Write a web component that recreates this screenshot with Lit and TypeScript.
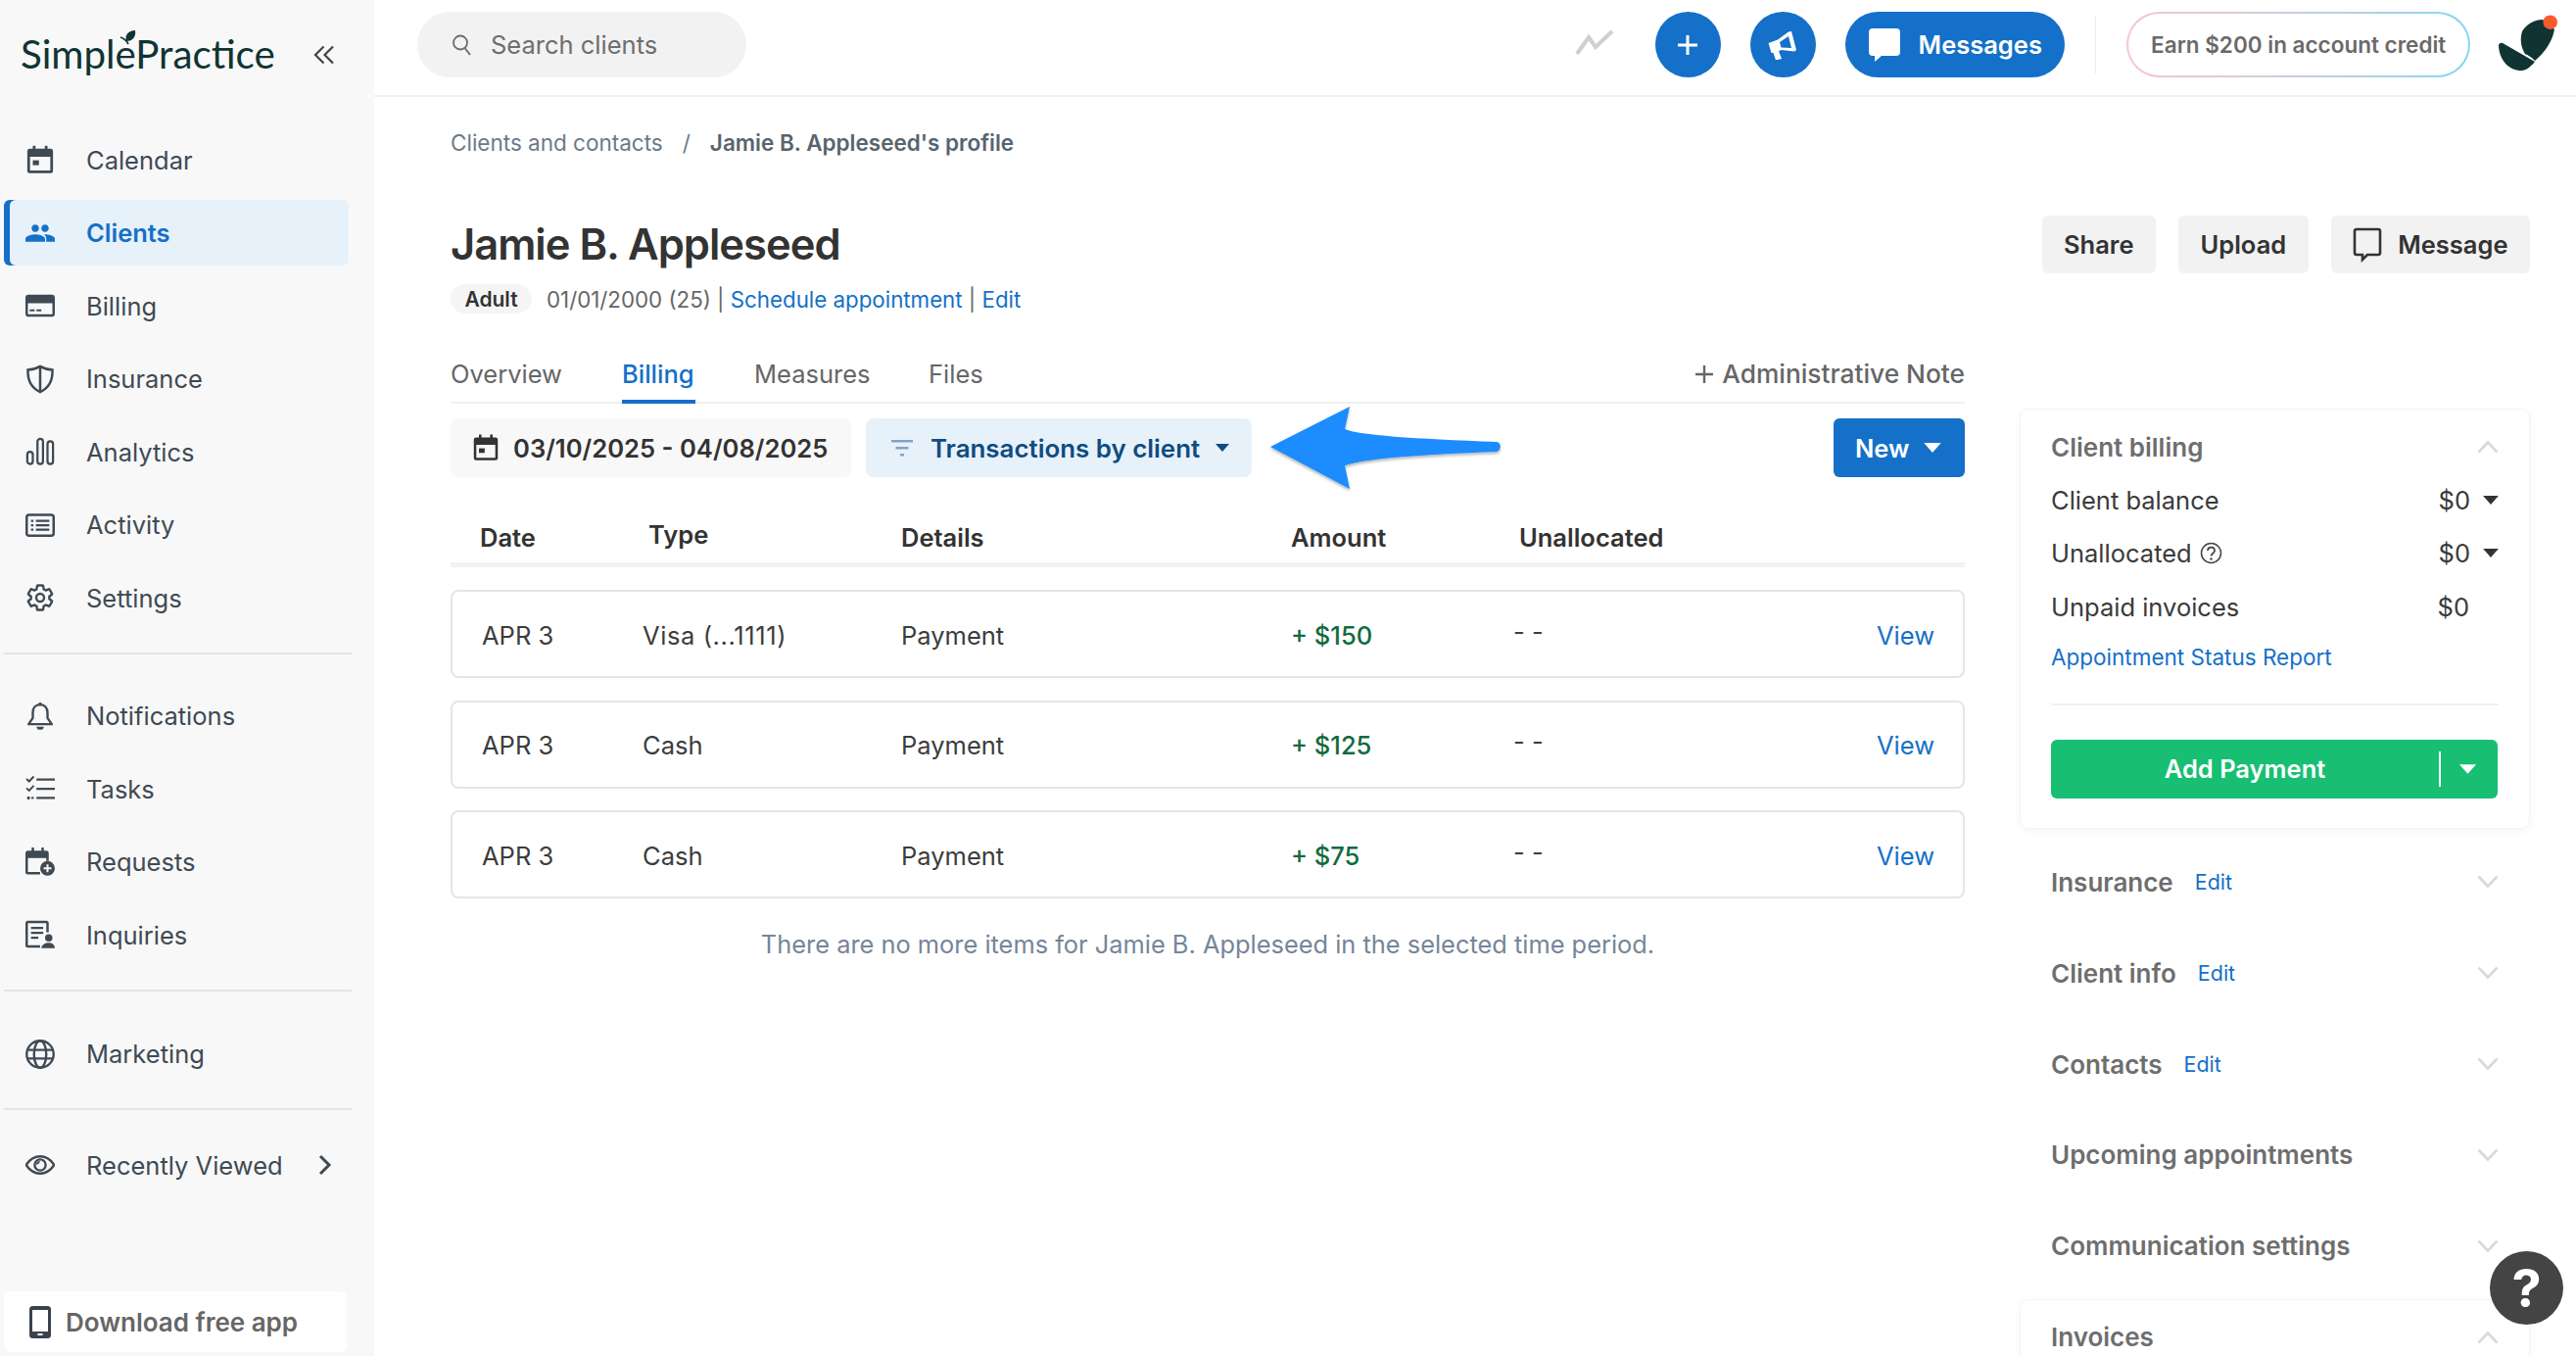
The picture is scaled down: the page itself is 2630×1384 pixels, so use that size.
import { LitElement, html, css, svg } from "lit";
import { customElement } from "lit/decorators.js";

const icons: Record<string, unknown> = {
  calendar: svg`<path fill-rule="evenodd" d="M6 .5h2.200v2.500h7.600V.5H18v2.500h2.500a2 2 0 012 2V21a2 2 0 01-2 2h-17a2 2 0 01-2-2V5a2 2 0 012-2H6zM3.700 9.500V20.800h16.600V9.500z"/><rect x="6" y="12.500" width="5" height="4"/>`,
  clients: svg`<path d="M16 11c1.660 0 2.990-1.340 2.990-3S17.660 5 16 5c-1.660 0-3 1.340-3 3s1.340 3 3 3zm-8 0c1.660 0 2.990-1.340 2.990-3S9.660 5 8 5C6.340 5 5 6.340 5 8s1.340 3 3 3zm0 2c-2.330 0-8 1.170-8 3.500V19h16v-2.500c0-2.330-5.670-3.500-8-3.500zm8 0c-.290 0-.620.020-.970.050 1.160.840 1.970 1.970 1.970 3.450V19h7v-2.500c0-2.330-5.670-3.500-8-3.500z"/>`,
  billing: svg`<path fill-rule="evenodd" d="M2.500 3h19A2.500 2.500 0 0124 5.500v13a2.500 2.500 0 01-2.500 2.500h-19A2.500 2.500 0 010 18.500v-13A2.500 2.500 0 012.500 3zM2 10v9h20v-9z"/><rect x="3.500" y="15" width="4" height="1.600"/><rect x="9" y="15" width="4" height="1.600"/>`,
  insurance: svg`<path fill="none" stroke="currentColor" stroke-width="2" d="M12 1.500c3 1.800 6 2.700 10 2.800.4 8-2.600 14.700-10 18.200C4.600 19 1.600 12.300 2 4.300 6 4.200 9 3.300 12 1.500zM12 1.500v21"/>`,
  analytics: svg`<g fill="none" stroke="currentColor" stroke-width="1.800"><rect x="1.500" y="12" width="4.500" height="10" rx="2.250"/><rect x="9.800" y="1.500" width="4.500" height="20.500" rx="2.250"/><rect x="18" y="3.500" width="4.500" height="18.500" rx="2.250"/></g>`,
  activity: svg`<rect x="1" y="3.500" width="22" height="17" rx="2" fill="none" stroke="currentColor" stroke-width="2"/><path d="M4.500 7.500h2v1.800h-2zM8.500 7.500h11v1.800h-11zM4.500 11.100h2v1.800h-2zM8.500 11.100h11v1.800h-11zM4.500 14.700h2v1.800h-2zM8.500 14.700h11v1.800h-11z"/>`,
  settings: svg`<path fill="none" stroke="currentColor" stroke-width="1.900" stroke-linejoin="round" d="M19.430 12.980c.04-.32.07-.64.07-.98s-.03-.66-.07-.98l2.110-1.650c.19-.15.24-.42.12-.64l-2-3.460c-.12-.22-.39-.3-.61-.22l-2.490 1c-.52-.4-1.080-.73-1.690-.98l-.38-2.650C14.460 2.180 14.250 2 14 2h-4c-.25 0-.46.18-.49.42l-.38 2.650c-.61.25-1.170.59-1.690.98l-2.490-1c-.23-.09-.49 0-.61.22l-2 3.460c-.13.22-.07.49.12.64l2.110 1.650c-.04.32-.07.65-.07.98s.03.66.07.98l-2.110 1.650c-.19.15-.24.42-.12.64l2 3.460c.12.22.39.3.61.22l2.490-1c.52.4 1.080.73 1.690.98l.38 2.650c.03.24.24.42.49.42h4c.25 0 .46-.18.49-.42l.38-2.650c.61-.25 1.170-.59 1.690-.98l2.490 1c.23.09.49 0 .61-.22l2-3.460c.12-.22.07-.49-.12-.64l-2.110-1.650z"/><circle cx="12" cy="12" r="3.200" fill="none" stroke="currentColor" stroke-width="1.900"/>`,
  bell: svg`<path fill="none" stroke="currentColor" stroke-width="1.900" stroke-linejoin="round" d="M12 2.500c-3.800 0-6 2.800-6 6.500v4.500L2.500 18.500h19L18 13.500V9c0-3.700-2.200-6.500-6-6.500z"/><path d="M12 .5a1.300 1.300 0 011.300 1.300v1.200h-2.600V1.800A1.300 1.300 0 0112 .5zM9 20.500h6a3 2.500 0 01-6 0z"/>`,
  tasks: svg`<path fill="none" stroke="currentColor" stroke-width="1.800" d="M9 4.500H24M9 12H24M9 19.500H24"/><path fill="none" stroke="currentColor" stroke-width="1.600" d="M.8 4l2.200 2 3.800-4M.8 11.500l2.200 2 3.800-4"/><circle cx="2.500" cy="19.500" r="1.300"/><rect x="4.800" y="18.700" width="2" height="1.600"/>`,
  requests: svg`<path fill-rule="evenodd" d="M5 0h2v2.500h6V0h2v2.500h2a2 2 0 012 2V11h-2V8.500H2V20h10v2H2a2 2 0 01-2-2V4.500a2 2 0 012-2h3z"/><circle cx="18" cy="17" r="6"/><path fill="#f8f8f8" d="M17.200 13.800h1.600v2.400h2.400v1.600h-2.400v2.400h-1.600v-2.400h-2.400v-1.600h2.400z"/>`,
  inquiries: svg`<path fill-rule="evenodd" d="M2 .5h15a2 2 0 012 2V10h-2V2.500H2v18h10v2H2a2 2 0 01-2-2v-18a2 2 0 012-2z"/><path d="M4.500 5.500h10v1.800h-10zM4.500 9.500h10v1.800h-10zM4.500 13.500h6v1.800h-6z"/><circle cx="19" cy="14.500" r="3"/><path d="M13 23c0-3 3.300-4.500 6-4.500s5 1.500 5 4.500z"/>`,
  globe: svg`<g fill="none" stroke="currentColor" stroke-width="1.900"><circle cx="12" cy="12" r="11"/><ellipse cx="12" cy="12" rx="5" ry="11"/><path d="M1.500 8.500h21M1.500 15.500h21"/></g>`,
  eye: svg`<path fill="none" stroke="currentColor" stroke-width="1.900" d="M.5 12C3.500 7.500 7.500 5 12 5s8.500 2.500 11.500 7c-3 4.500-7 7-11.500 7S3.500 16.500.5 12z"/><circle cx="12" cy="12" r="4.500" fill="none" stroke="currentColor" stroke-width="1.900"/><path d="M12 8.800a3.200 3.200 0 00-3.200 3.200c1.200-.3 2.900-1.500 3.200-3.200z"/>`,
};

const ic = (name: string) => html`<svg class="nav-ic" viewBox="0 0 24 24" fill="currentColor">${icons[name]}</svg>`;

const chevron = (up: boolean) => html`<svg class="chev" viewBox="0 0 22 14"><path fill="none" stroke="#d9d9d9" stroke-width="2.600" d=${up ? "M1.500 12.500L11 2.500l9.500 10" : "M1.500 1.500L11 11.500l9.500-10"}/></svg>`;

const caret = (cls: string) => html`<svg class=${cls} viewBox="0 0 14 8" fill="currentColor"><path d="M0 0h14L7 8z"/></svg>`;

const navTop = [
  ["calendar", "Calendar"],
  ["clients", "Clients"],
  ["billing", "Billing"],
  ["insurance", "Insurance"],
  ["analytics", "Analytics"],
  ["activity", "Activity"],
  ["settings", "Settings"],
];
const navMid = [
  ["bell", "Notifications"],
  ["tasks", "Tasks"],
  ["requests", "Requests"],
  ["inquiries", "Inquiries"],
];

const rows = [
  ["Visa (...1111)", "+ $150"],
  ["Cash", "+ $125"],
  ["Cash", "+ $75"],
];

const accordion = [
  ["Insurance", true],
  ["Client info", true],
  ["Contacts", true],
  ["Upcoming appointments", false],
  ["Communication settings", false],
] as const;

@customElement("app-root")
export class AppRoot extends LitElement {
  static styles = css`
    :host {
      display: flex;
      width: 2630px;
      height: 1384px;
      overflow: hidden;
      position: relative;
      background: #fff;
      font-family: Inter, "Liberation Sans", sans-serif;
      color: #333;
      font-size: 25.5px;
    }
    * { box-sizing: border-box; }
    a { color: #1470c8; text-decoration: none; }

    /* sidebar */
    .side {
      width: 382px;
      flex: none;
      background: #f8f8f8;
      display: flex;
      flex-direction: column;
      height: 1384px;
      color: #3f4a54;
    }
    .brand {
      height: 129.5px;
      flex: none;
      display: flex;
      align-items: flex-start;
      padding: 25px 0 0 21px;
    }
    .logo {
      position: relative;
      font-family: Lato, "Liberation Sans", sans-serif;
      font-size: 40.3px;
      line-height: 60px;
      color: #0f3433;
      width: 299px;
      flex: none;
      white-space: nowrap;
    }
    .leaf { position: absolute; left: 99px; top: 5px; width: 22px; height: 22px; }
    .collapse { width: 22px; height: 20px; margin-top: 21px; color: #444; flex: none; }
    .nav { display: flex; flex-direction: column; gap: 7.5px; }
    .item {
      height: 67px;
      width: 352px;
      margin-left: 4px;
      padding-left: 22px;
      display: flex;
      align-items: center;
      gap: 32px;
      border-radius: 6px;
      font-size: 25.5px;
      flex: none;
      white-space: nowrap;
    }
    .item.active {
      background: #e7f1fa;
      color: #1470c8;
      font-weight: 600;
      box-shadow: inset 6px 0 0 #1470c8;
    }
    .nav-ic { width: 30px; height: 30px; flex: none; }
    .rule { height: 2px; background: #e4e4e4; width: 355px; margin-left: 4px; flex: none; }
    .mt1 { margin-top: 22px; }
    .mb1 { margin-bottom: 29.500px; }
    .mb2 { margin-bottom: 30.500px; }
    .mb3 { margin-bottom: 22.500px; }
    .go { margin-left: auto; margin-right: 16px; width: 16px; height: 24px; flex: none; }
    .download {
      margin: auto 0 4px 4px;
      width: 350px;
      height: 62px;
      background: #fff;
      border-radius: 6px;
      display: flex;
      align-items: center;
      padding-left: 26px;
      gap: 15px;
      color: #666;
      font-weight: 600;
      font-size: 26px;
      flex: none;
    }
    .download svg { width: 22px; height: 33px; color: #39434d; }

    /* main */
    .main { flex: 1; min-width: 0; display: flex; flex-direction: column; }
    .top {
      height: 99px;
      flex: none;
      border-bottom: 2px solid #f2f2f2;
      display: flex;
      align-items: flex-start;
      padding: 12px 18px 0 44px;
    }
    .search {
      width: 336px;
      height: 67px;
      border-radius: 34px;
      background: #f2f2f2;
      display: flex;
      align-items: center;
      padding-left: 35px;
      gap: 19px;
      color: #6e6e6e;
      font-size: 25.5px;
    }
    .search svg { width: 21px; height: 24px; }
    .trend { width: 40px; height: 27px; margin: 18px 0 0 846px; }
    .round {
      width: 67px;
      height: 67px;
      border-radius: 50%;
      background: #1470c8;
      display: flex;
      align-items: center;
      justify-content: center;
      flex: none;
    }
    .round svg { width: 30px; height: 30px; }
    .r1 { margin-left: 42px; }
    .r2 { margin-left: 30px; }
    .msgs {
      margin-left: 30px;
      width: 225px;
      height: 67px;
      border-radius: 34px;
      background: #1470c8;
      color: #fff;
      font-weight: 600;
      font-size: 25.5px;
      display: flex;
      align-items: center;
      padding-left: 24px;
      gap: 19px;
    }
    .msgs svg { width: 32px; height: 34px; }
    .vsep { width: 1px; height: 59px; background: #ececec; margin: 4px 31px 0 31px; }
    .earn {
      width: 351px;
      height: 67px;
      border-radius: 34px;
      border: 2px solid transparent;
      background: linear-gradient(#fff, #fff) padding-box, linear-gradient(90deg, #f7c7cf, #c9cdde 50%, #85d7f2) border-box;
      color: #6a6a6a;
      font-weight: 600;
      font-size: 22.500px;
      display: flex;
      align-items: center;
      justify-content: center;
      white-space: nowrap;
    }
    .avatar { width: 62px; height: 62px; margin-left: 28px; margin-top: 2px; flex: none; }

    .content { flex: 1; min-height: 0; padding: 0 47px 0 78px; }
    .crumbs {
      margin-top: 31px;
      height: 30px;
      display: flex;
      align-items: center;
      font-size: 22.500px;
      color: #6b7a88;
    }
    .crumbs .sl { margin: 0 20px; }
    .crumbs b { font-weight: 600; color: #57646f; }
    .head { display: flex; align-items: flex-start; justify-content: space-between; margin-top: 61px; }
    h1 { margin: 0; font-size: 43.500px; line-height: 56px; font-weight: 600; color: #333; letter-spacing: -1px; }
    .actions { display: flex; gap: 23px; margin-top: -1px; }
    .btn {
      height: 59px;
      border-radius: 6px;
      background: #f2f2f2;
      display: flex;
      align-items: center;
      padding: 0 22.5px;
      font-size: 25.5px;
      font-weight: 600;
      color: #333;
    }
    .btn svg { width: 30px; height: 36px; margin-right: 16px; }
    .meta { display: flex; align-items: center; height: 30px; margin-top: 11px; font-size: 22.300px; color: #666; }
    .pill {
      width: 83px;
      height: 30px;
      border-radius: 15px;
      background: #f5f5f5;
      display: flex;
      align-items: center;
      justify-content: center;
      color: #333;
      font-weight: 600;
      font-size: 21px;
      margin-right: 15px;
    }
    .cols { display: flex; gap: 57px; margin-top: 30px; }
    .left { width: 1546px; flex: none; }
    .right { width: 519px; flex: none; padding-top: 68px; }

    .tabs {
      height: 62px;
      border-bottom: 2px solid #f0f0f0;
      display: flex;
      align-items: flex-start;
      font-size: 25.5px;
      color: #666;
    }
    .tab { height: 62px; line-height: 64px; flex: none; }
    .tab.on { color: #1470c8; font-weight: 500; border-bottom: 4px solid #1470c8; }
    .t1 { width: 175px; }
    .t2 { width: 75px; margin-right: 60px; }
    .t3 { width: 178px; }
    .admin { margin-left: auto; font-weight: 500; font-size: 26.3px; line-height: 64px; display: flex; align-items: center; gap: 8px; }
    .admin svg { width: 20px; height: 20px; }

    .tools { position: relative; display: flex; gap: 15px; margin-top: 15px; height: 60px; }
    .date, .filter {
      height: 60px;
      border-radius: 8px;
      display: flex;
      align-items: center;
      font-weight: 600;
    }
    .date { width: 409px; background: #f8f8f8; padding-left: 22px; gap: 14px; font-size: 25.6px; }
    .date svg { width: 28px; height: 28px; flex: none; color: #333; }
    .filter { width: 394px; background: #e7f1fa; color: #0f4c81; padding-left: 24px; gap: 16px; font-size: 25.9px; }
    .filter .fic { width: 26px; height: 24px; flex: none; }
    .filter .car { width: 14px; height: 8px; }
    .new {
      margin-left: auto;
      width: 134px;
      height: 60px;
      border-radius: 6px;
      background: #1470c8;
      color: #fff;
      font-weight: 600;
      font-size: 25.5px;
      display: flex;
      align-items: center;
      padding-left: 22px;
      gap: 15px;
    }
    .new .car { width: 18px; height: 10px; }
    .arrow { position: absolute; left: 835px; top: -14px; width: 242px; height: 90px; }

    .thead {
      display: grid;
      grid-template-columns: 172px 258px 398px 233px 1fr;
      align-items: center;
      padding-left: 30px;
      margin-top: 35px;
      height: 57px;
      border-bottom: 5px solid #f2f2f2;
      font-weight: 600;
      font-size: 25.500px;
      color: #333;
    }
    .raise { padding-bottom: 6px; }
    .rows { display: flex; flex-direction: column; gap: 22.500px; margin-top: 23px; }
    .row {
      height: 90px;
      border: 2px solid #e5e5e5;
      border-radius: 8px;
      display: grid;
      grid-template-columns: 164px 264px 398px 227px 1fr;
      align-items: center;
      padding: 2px 29px 0 30px;
      font-size: 25.500px;
      color: #3c3c3c;
    }
    .card-type { letter-spacing: 0.6px; }
    .amt { color: #126b3d; font-weight: 500; }
    .rowend { display: flex; justify-content: space-between; align-items: center; }
    .dash { padding-bottom: 8px; }
    .none { margin-top: 32px; line-height: 30px; text-align: center; color: #768599; font-size: 25.400px; }

    /* right */
    .card {
      border-radius: 8px;
      box-shadow: 0 0 0 1px #f4f4f4, 0 2px 10px rgba(0, 0, 0, 0.05);
      background: #fff;
      padding: 18px 31px 30px;
    }
    .ctitle, .acc {
      display: flex;
      align-items: center;
      font-weight: 600;
      font-size: 26px;
      color: #6e6e6e;
    }
    .ctitle { height: 40px; margin-bottom: 7px; }
    .chev { width: 22px; height: 14px; margin-left: auto; flex: none; }
    .kv { height: 54.500px; display: flex; align-items: center; font-size: 25.500px; color: #3a3a3a; }
    .kv .q { width: 23px; height: 23px; margin-left: 8px; }
    .kv .val { margin-left: auto; }
    .kv .car { width: 16px; height: 9px; margin-left: 13px; color: #333; flex: none; }
    .kv .pad { width: 30px; flex: none; }
    .report { display: block; font-size: 22.500px; line-height: 30px; margin-top: 9px; }
    .cdiv { height: 2px; background: #f0f0f0; margin-top: 32px; }
    .pay {
      margin-top: 35px;
      width: 456px;
      height: 60px;
      border-radius: 6px;
      background: #18bf72;
      color: #fff;
      font-weight: 600;
      font-size: 25.5px;
      display: flex;
      align-items: center;
    }
    .pay .lbl { width: 396px; text-align: center; }
    .pay .bar { width: 2px; height: 36px; background: #fff; flex: none; }
    .pay .car { width: 17px; height: 10px; margin-left: 19px; }
    .accs { margin-top: 9.600px; }
    .acc { height: 92.800px; padding: 0 31px; }
    .acc a { font-weight: 400; font-size: 21.500px; margin-left: 22px; }
    .inv { margin-top: 8.600px; }
    .help {
      position: absolute;
      left: 2542px;
      top: 1277px;
      width: 75px;
      height: 75px;
      border-radius: 50%;
      background: #444;
      color: #fff;
      font-weight: 700;
      font-size: 54px;
      display: flex;
      align-items: center;
      justify-content: center;
    }
  `;

  render() {
    return html`
      <aside class="side">
        <div class="brand">
          <div class="logo">SimplePractice
            <svg class="leaf" viewBox="0 0 22 22"><path fill="#0f3433" d="M9 12C7 6 11 1 18 1c1 6-2 11-9 11z"/><path fill="none" stroke="#0f3433" stroke-width="1.800" d="M3 8c3 1 6 3 8 7"/></svg>
          </div>
          <svg class="collapse" viewBox="0 0 22 20"><path fill="none" stroke="currentColor" stroke-width="2.200" d="M10.500 1.500L2 10l8.500 8.500M20 1.500L11.500 10l8.500 8.500"/></svg>
        </div>
        <div class="nav">
          ${navTop.map(([i, t]) => html`<div class="item ${t === "Clients" ? "active" : ""}">${ic(i)}<span>${t}</span></div>`)}
        </div>
        <div class="rule mt1 mb1"></div>
        <div class="nav">
          ${navMid.map(([i, t]) => html`<div class="item">${ic(i)}<span>${t}</span></div>`)}
        </div>
        <div class="rule mt1 mb2"></div>
        <div class="item">${ic("globe")}<span>Marketing</span></div>
        <div class="rule mt1 mb3"></div>
        <div class="item">${ic("eye")}<span>Recently Viewed</span>
          <svg class="go" viewBox="0 0 16 24"><path fill="none" stroke="currentColor" stroke-width="3" d="M3 3l9 9-9 9"/></svg>
        </div>
        <div class="download">
          <svg viewBox="0 0 22 33" fill="currentColor"><path fill-rule="evenodd" d="M3.500 0h15A3.500 3.500 0 0122 3.500v26a3.500 3.500 0 01-3.500 3.500h-15A3.500 3.500 0 010 29.500v-26A3.500 3.500 0 013.500 0zM3 4v22h16V4z"/><rect x="8.500" y="28" width="5" height="2" fill="#fff"/></svg>
          <span>Download free app</span>
        </div>
      </aside>

      <div class="main">
        <header class="top">
          <div class="search">
            <svg viewBox="0 0 21 24"><circle cx="9" cy="9.500" r="7" fill="none" stroke="#6e6e6e" stroke-width="1.800"/><path stroke="#6e6e6e" stroke-width="2" d="M13.500 15l5.500 7"/></svg>
            <span>Search clients</span>
          </div>
          <svg class="trend" viewBox="0 0 40 27"><path fill="none" stroke="#cfcfcf" stroke-width="4" d="M2 25l12-17 7 10L38 2"/></svg>
          <div class="round r1"><svg viewBox="0 0 30 30"><path stroke="#fff" stroke-width="3" d="M15 5v20M5 15h20"/></svg></div>
          <div class="round r2"><svg viewBox="0 0 30 30" fill="#fff"><path fill-rule="evenodd" d="M.5 13l9.500-3.500L21 1.500 24 1l5 19-2 1.500L14 20l-3 1 3 8-6 1.500L5.500 23l-2 0zM12 12l1.500 5.500 10.500.5L21 6z"/></svg></div>
          <div class="msgs">
            <svg viewBox="0 0 32 34" fill="#fff"><path d="M4 0h24a4 4 0 014 4v20a4 4 0 01-4 4H13l-7 6v-6H4a4 4 0 01-4-4V4a4 4 0 014-4z"/></svg>
            <span>Messages</span>
          </div>
          <div class="vsep"></div>
          <div class="earn">Earn $200 in account credit</div>
          <svg class="avatar" viewBox="0 0 62 62">
            <path fill="#0f3433" d="M25 18C30 10 38 6 46 6l12 10c-2 12-10 24-20 32-4-4-7-6-10-7-3-5-6-13-3-23z"/>
            <path fill="#0f3433" d="M1 33c0-3 3-4 5-2.500L38 49c-6 7-10 9-14 9C12 58 2 48 1 33z"/>
            <circle cx="53.700" cy="8.700" r="7.300" fill="#f95a2c"/>
          </svg>
        </header>

        <div class="content">
          <div class="crumbs"><span>Clients and contacts</span><span class="sl">/</span><b>Jamie B. Appleseed's profile</b></div>
          <div class="head">
            <h1>Jamie B. Appleseed</h1>
            <div class="actions">
              <div class="btn">Share</div>
              <div class="btn">Upload</div>
              <div class="btn">
                <svg viewBox="0 0 30 36"><path fill="none" stroke="#333" stroke-width="2.600" d="M4 2h22a2 2 0 012 2v22a2 2 0 01-2 2H15l-5 5v-5H4a2 2 0 01-2-2V4a2 2 0 012-2z"/></svg>
                Message
              </div>
            </div>
          </div>
          <div class="meta">
            <span class="pill">Adult</span>
            <span>01/01/2000 (25) |&nbsp;</span><a>Schedule appointment</a><span>&nbsp;|&nbsp;</span><a>Edit</a>
          </div>

          <div class="cols">
            <div class="left">
              <div class="tabs">
                <div class="tab t1">Overview</div>
                <div class="tab t2 on">Billing</div>
                <div class="tab t3">Measures</div>
                <div class="tab">Files</div>
                <div class="admin"><svg viewBox="0 0 20 20"><path stroke="#666" stroke-width="2.400" d="M10 1v18M1 10h18"/></svg>Administrative Note</div>
              </div>
              <div class="tools">
                <div class="date">
                  <svg viewBox="0 0 24 24" fill="currentColor">${icons.calendar}</svg>
                  <span>03/10/2025 - 04/08/2025</span>
                </div>
                <div class="filter">
                  <svg class="fic" viewBox="0 0 26 24"><path fill="#7ea3c8" d="M2 4h22v2.500H2zM6.500 11h13v2.500h-13zM11 18h4v2.500h-4z"/></svg>
                  <span>Transactions by client</span>
                  ${caret("car")}
                </div>
                <div class="new"><span>New</span>${caret("car")}</div>
                <svg class="arrow" viewBox="0 0 242 90">
                  <defs><filter id="as" x="-5%" y="-5%" width="110%" height="120%"><feDropShadow dx="0" dy="2" stdDeviation="1.500" flood-color="#000" flood-opacity=".3"/></filter></defs>
                  <path filter="url(#as)" fill="#1a8cff" d="M2 43L83 2l-5 23c14 6 70 10 155 13 5 .5 5 9 0 10-82 3-132 7-155 14l5 24z"/>
                </svg>
              </div>

              <div class="thead">
                <span>Date</span><span class="raise">Type</span><span>Details</span><span>Amount</span><span>Unallocated</span>
              </div>
              <div class="rows">
                ${rows.map(
                  ([type, amt]) => html`<div class="row">
                    <span>APR 3</span><span class=${type.startsWith("Visa") ? "card-type" : ""}>${type}</span><span>Payment</span><span class="amt">${amt}</span>
                    <div class="rowend"><span class="dash">- -</span><a>View</a></div>
                  </div>`
                )}
              </div>
              <div class="none">There are no more items for Jamie B. Appleseed in the selected time period.</div>
            </div>

            <div class="right">
              <div class="card">
                <div class="ctitle"><span>Client billing</span>${chevron(true)}</div>
                <div class="kv"><span>Client balance</span><span class="val">$0</span>${caret("car")}</div>
                <div class="kv"><span>Unallocated</span>
                  <svg class="q" viewBox="0 0 23 23"><circle cx="11.500" cy="11.500" r="10" fill="none" stroke="#444" stroke-width="1.500"/><path fill="none" stroke="#444" stroke-width="1.800" d="M8 9c0-4.500 7-4.500 7 0 0 3-3.500 2.500-3.500 5.500"/><circle cx="11.500" cy="17.500" r="1.200" fill="#444"/></svg>
                  <span class="val">$0</span>${caret("car")}</div>
                <div class="kv"><span>Unpaid invoices</span><span class="val">$0</span><span class="pad"></span></div>
                <a class="report">Appointment Status Report</a>
                <div class="cdiv"></div>
                <div class="pay"><span class="lbl">Add Payment</span><span class="bar"></span>${caret("car")}</div>
              </div>
              <div class="accs">
                ${accordion.map(
                  ([t, e]) => html`<div class="acc"><span>${t}</span>${e ? html`<a>Edit</a>` : ""}${chevron(false)}</div>`
                )}
              </div>
              <div class="card inv">
                <div class="ctitle"><span>Invoices</span>${chevron(true)}</div>
              </div>
            </div>
          </div>
        </div>
      </div>
      <div class="help">?</div>
    `;
  }
}
